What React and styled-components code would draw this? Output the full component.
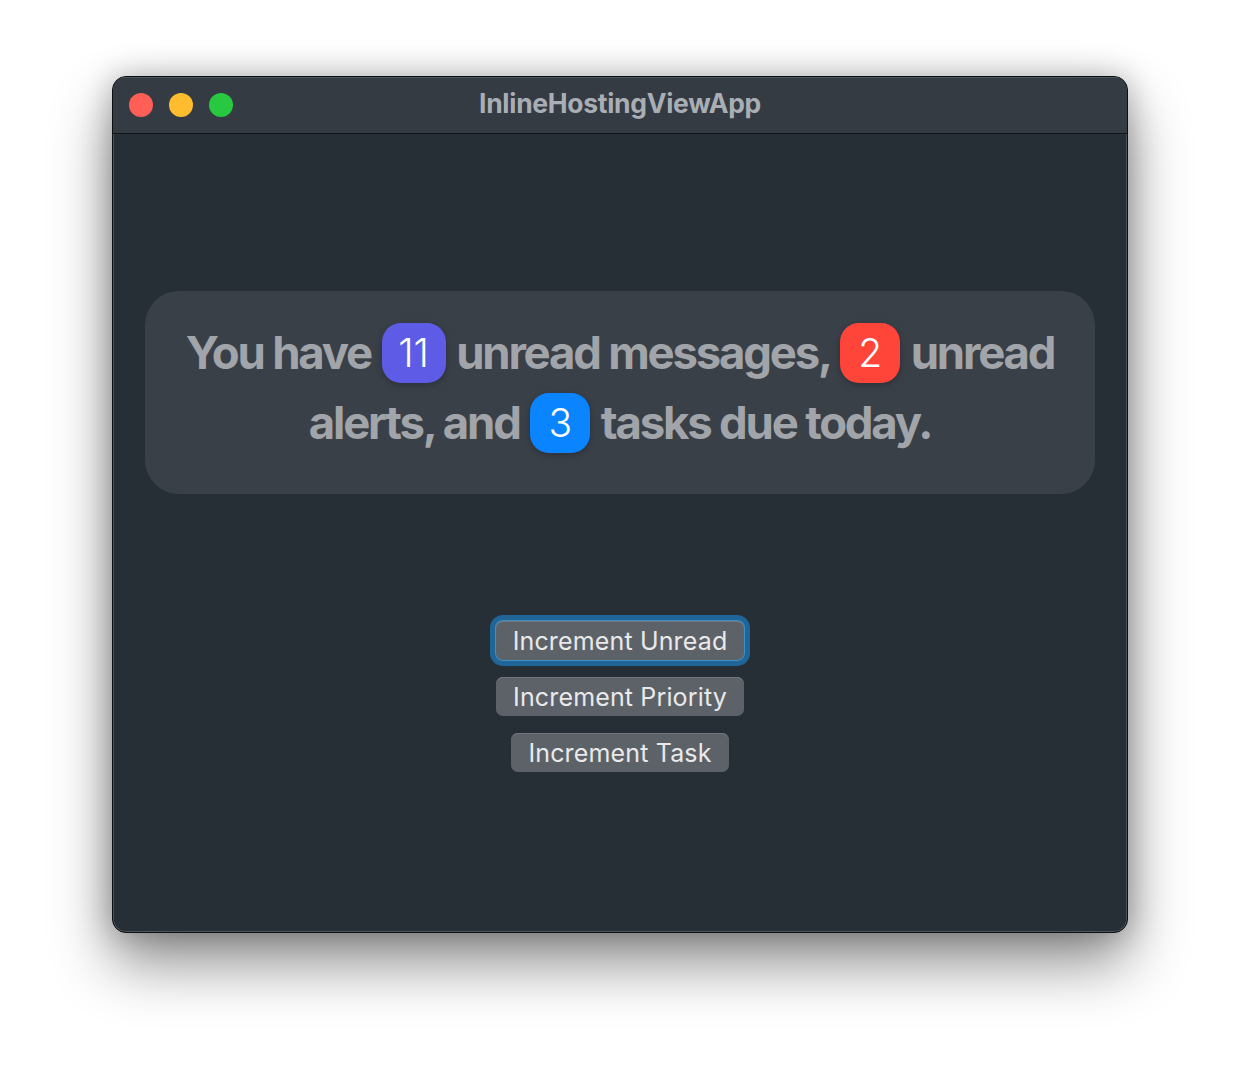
import React, { useState } from "react";
import styled, { createGlobalStyle } from "styled-components";

const GlobalStyle = createGlobalStyle`
  html, body {
    margin: 0;
    padding: 0;
    background: #ffffff;
  }
  body {
    font-family: Inter, "Noto Sans", "Liberation Sans", sans-serif;
  }
`;

const Page = styled.div`
  width: 1240px;
  height: 1080px;
  padding: 76px 112px 0;
  box-sizing: border-box;
`;

const Window = styled.div`
  height: 855px;
  border-radius: 14px;
  background: #262f36;
  border: 1px solid #0c0e10;
  box-shadow: inset 0 0 0 1px #50565d, 0 30px 60px rgba(0, 0, 0, 0.45),
    0 0 30px rgba(0, 0, 0, 0.25);
  overflow: hidden;
  display: flex;
  flex-direction: column;
`;

const TitleBar = styled.div`
  height: 56px;
  flex: none;
  background: #353b43;
  border-bottom: 1px solid #101417;
  box-shadow: inset 0 1px 0 #50565d;
  display: flex;
  align-items: center;
  position: relative;
  padding-left: 16px;
`;

const Lights = styled.div`
  display: flex;
  gap: 16px;
`;

const Light = styled.span`
  width: 24px;
  height: 24px;
  border-radius: 50%;
  background: ${(p) => p.color};
`;

const Title = styled.div`
  position: absolute;
  left: 0;
  right: 0;
  top: 10px;
  text-align: center;
  font-size: 26.5px;
  line-height: 32px;
  font-weight: 700;
  color: #a9aeb5;
  letter-spacing: -0.3px;
  pointer-events: none;
`;

const Content = styled.div`
  flex: 1;
  display: flex;
  flex-direction: column;
  align-items: center;
  padding: 157px 32px 0;
`;

const Card = styled.div`
  align-self: stretch;
  background: #3a4048;
  border-radius: 34px;
  padding: 27px 20px 36px;
  text-align: center;
  font-size: 45.5px;
  line-height: 70px;
  font-weight: 700;
  letter-spacing: -2.2px;
  color: #a1a4a8;
`;

const Line = styled.div`
  white-space: nowrap;
`;

const Badge = styled.span`
  display: inline-flex;
  align-items: center;
  justify-content: center;
  height: 60px;
  min-width: ${(p) => (p.wide ? 64 : 60)}px;
  box-sizing: border-box;
  border-radius: 19px;
  background: ${(p) => p.bg};
  color: #ffffff;
  font-size: 39px;
  font-weight: 300;
  letter-spacing: 0;
  line-height: 60px;
  vertical-align: 2px;
  margin: 0 2px;
  box-shadow: 0 2px 6px rgba(0, 0, 0, 0.25);
`;

const Buttons = styled.div`
  display: flex;
  flex-direction: column;
  align-items: center;
  gap: 17px;
  margin-top: 127px;
`;

const Button = styled.button`
  height: 39px;
  padding: 0 17px;
  border: none;
  border-radius: 7px;
  background: #5d6268;
  box-shadow: inset 0 1px 0 #72777c
    ${(p) => (p.focused ? ", 0 0 0 1px #3f8fc6, 0 0 0 6px #1f6598" : "")};
  color: #e9e9ea;
  font-family: Inter, "Noto Sans", sans-serif;
  font-size: 25px;
  font-weight: 400;
  letter-spacing: 0.15px;
  cursor: pointer;
`;

export default function App() {
  const [unread, setUnread] = useState(11);
  const [priority, setPriority] = useState(2);
  const [tasks, setTasks] = useState(3);

  return (
    <Page>
      <GlobalStyle />
      <Window>
        <TitleBar>
          <Lights>
            <Light color="#ff5f57" />
            <Light color="#febc2e" />
            <Light color="#28c840" />
          </Lights>
          <Title>InlineHostingViewApp</Title>
        </TitleBar>
        <Content>
          <Card>
            <Line>
              You have <Badge bg="#5e5ce6" wide={unread > 9}>{unread}</Badge>{" "}
              unread messages,{" "}
              <Badge bg="#ff453a" wide={priority > 9}>{priority}</Badge> unread
            </Line>
            <Line>
              alerts, and <Badge bg="#0a84ff" wide={tasks > 9}>{tasks}</Badge>{" "}
              tasks due today.
            </Line>
          </Card>
          <Buttons>
            <Button focused onClick={() => setUnread(unread + 1)}>
              Increment Unread
            </Button>
            <Button onClick={() => setPriority(priority + 1)}>
              Increment Priority
            </Button>
            <Button onClick={() => setTasks(tasks + 1)}>Increment Task</Button>
          </Buttons>
        </Content>
      </Window>
    </Page>
  );
}
